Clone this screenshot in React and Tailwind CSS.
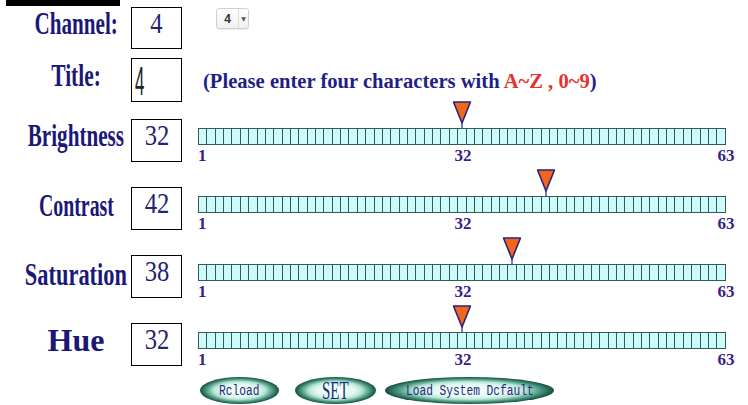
import React from "react";

const CELLS = 63;
const BAR_W = 528;

const rows = [
  { label: "Brightness", value: 32, scale: "scale-x-[0.66]", pt: "pt-0" },
  { label: "Contrast", value: 42, scale: "scale-x-[0.62]", pt: "pt-[2px]" },
  { label: "Saturation", value: 38, scale: "scale-x-[0.7]", pt: "pt-[3px]" },
  { label: "Hue", value: 32, scale: "", pt: "pt-[1px]" },
];

function Label({ text, scale, pt = "pt-0" }) {
  return (
    <div className={`flex h-[43px] w-[110px] shrink-0 justify-center ${pt}`}>
      <span
        className={`inline-block whitespace-nowrap text-[32px] font-bold leading-none text-[#1b1878] ${scale}`}
      >
        {text}
      </span>
    </div>
  );
}

function ValueBox({ value, h = "h-[43px]" }) {
  return (
    <div
      className={`flex ${h} w-[51px] shrink-0 justify-center border-[1.5px] border-black`}
    >
      <span className="inline-block scale-x-[0.82] text-[30px] leading-none text-[#232370]">
        {value}
      </span>
    </div>
  );
}

function Marker({ value }) {
  const left = ((value - 0.5) * BAR_W) / CELLS;
  return (
    <svg
      width="19"
      height="27"
      viewBox="0 0 19 27"
      className="absolute bottom-full -translate-x-1/2"
      style={{ left }}
    >
      <polygon
        points="1,1 18,1 9.5,22"
        fill="#f2661c"
        stroke="#2b237a"
        strokeWidth="1.6"
        strokeLinejoin="round"
      />
      <line x1="9.5" y1="22" x2="9.5" y2="27" stroke="#2b237a" strokeWidth="1.2" />
    </svg>
  );
}

function Slider({ value }) {
  return (
    <div className="relative w-[528px]">
      <Marker value={value} />
      <div className="flex h-[17px] w-[528px] border border-[#355a5a] bg-[#cdfbfb]">
        {Array.from({ length: CELLS }).map((_, i) => (
          <div key={i} className="flex-1 border-r border-[#355a5a] last:border-r-0" />
        ))}
      </div>
      <div className="relative mt-[2px] h-[17px] text-[17px] font-bold leading-none text-[#3a1f8c]">
        <span className="absolute left-0 top-0">1</span>
        <span className="absolute left-[265px] top-0 -translate-x-1/2">32</span>
        <span className="absolute left-[528px] top-0 -translate-x-1/2">63</span>
      </div>
    </div>
  );
}

function OvalButton({ children, w, big }) {
  return (
    <button
      className={`flex h-[27px] ${w} items-center justify-center rounded-[50%] bg-[radial-gradient(closest-side,#f4fffb_0%,#e4f8f1_48%,#b8e4d4_66%,#5fab93_80%,#2c7260_92%,#1b4c40_100%)]`}
    >
      {big ? (
        <span className="inline-block scale-x-[0.6] text-[25px] leading-none text-[#1f2a7a]">
          {children}
        </span>
      ) : (
        <span className="inline-block scale-x-[0.8] whitespace-nowrap font-['Liberation_Mono',monospace] text-[14px] leading-none text-[#1f2a7a]">
          {children}
        </span>
      )}
    </button>
  );
}

export default function App() {
  return (
    <div className="h-[405px] w-[748px] overflow-hidden bg-white font-['Liberation_Serif',serif]">
      <div className="ml-[6px] h-[6px] w-[114px] bg-black" />

      {/* Channel */}
      <div className="mt-[1px] flex items-start pl-[21px]">
        <Label text="Channel:" scale="scale-x-[0.66]" />
        <ValueBox value={4} h="h-[42px]" />
        <div className="ml-[34px] mt-[1px] flex h-[21px] w-[33px] rounded-[3px] border border-[#cfcfcf] bg-gradient-to-b from-white to-[#f0f0f0] shadow-[0_1px_1px_rgba(0,0,0,0.08)]">
          <div className="flex flex-1 items-center justify-center font-['Liberation_Sans',sans-serif] text-[12px] font-bold text-[#333]">
            4
          </div>
          <div className="flex w-[10px] items-center justify-center border-l border-[#dcdcdc] font-['DejaVu_Sans',sans-serif] text-[6px] text-[#555]">
            ▼
          </div>
        </div>
      </div>

      {/* Title */}
      <div className="mt-[8px] flex items-start pl-[21px]">
        <Label text="Title:" scale="scale-x-[0.67]" pt="pt-[1px]" />
        <div className="h-[44px] w-[51px] shrink-0 border-[1.5px] border-black pl-[2.5px] pt-[1.5px]">
          <span className="inline-block origin-left scale-x-[0.42] font-['Liberation_Sans',sans-serif] text-[40px] leading-none text-[#222]">
            4
          </span>
        </div>
        <div className="ml-[21px] whitespace-nowrap pt-[13px] text-[20.6px] font-bold leading-none text-[#1f1f88]">
          (Please enter four characters with{" "}
          <span className="text-[#e5322d]">A~Z , 0~9</span>)
        </div>
      </div>

      {/* Sliders */}
      <div className="mt-[17px] flex flex-col gap-[25px]">
        {rows.map((r) => (
          <div key={r.label} className="flex h-[43px] items-start pl-[21px]">
            <Label text={r.label} scale={r.scale} pt={r.pt} />
            <ValueBox value={r.value} />
            <div className="ml-[16px] pt-[9px]">
              <Slider value={r.value} />
            </div>
          </div>
        ))}
      </div>

      {/* Buttons */}
      <div className="mt-[11px] flex items-center pl-[200px]">
        <OvalButton w="w-[79px]">Rcload</OvalButton>
        <div className="ml-[16px]">
          <OvalButton w="w-[81px]" big>
            SET
          </OvalButton>
        </div>
        <div className="ml-[9px]">
          <OvalButton w="w-[169px]">Load System Dcfault</OvalButton>
        </div>
      </div>
    </div>
  );
}
